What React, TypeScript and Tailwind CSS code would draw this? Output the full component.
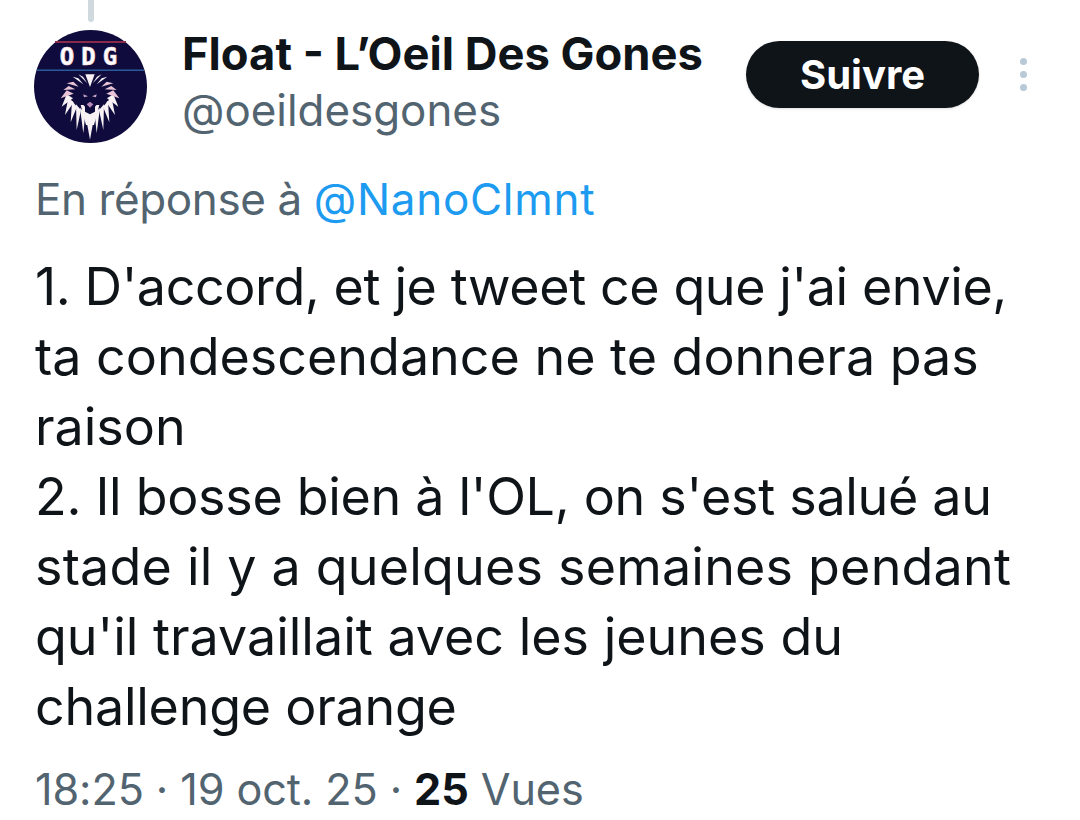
const font = { fontFamily: "Inter, 'Noto Sans', sans-serif" };

// mane strands, left side, drawn on a 3x grid and mirrored around x=120
const strands = [
  [90, 128, 106, 145, 100, 205],
  [78, 118, 93, 135, 80, 195],
  [66, 108, 81, 125, 62, 172],
  [55, 98, 71, 112, 45, 150],
  [50, 88, 69, 100, 35, 125],
  [50, 76, 71, 86, 32, 100],
  [56, 63, 76, 73, 40, 75],
  [70, 50, 86, 65, 50, 55],
  [85, 40, 100, 58, 68, 35],
  [99, 35, 112, 55, 85, 28],
];

function Avatar() {
  return (
    <svg viewBox="0 0 113 113" className="w-[113px] h-[113px] shrink-0">
      <circle cx="56.5" cy="56.5" r="56.5" fill="#0f0c3d" />
      <rect x="21" y="11" width="71" height="2" fill="#8a2a4a" />
      <rect x="3" y="39.5" width="107" height="1.5" fill="#2a5a9c" />
      <text x="58" y="35" textAnchor="middle" fontSize="24" fontWeight="700" fill="#fff" stroke="#f3d5df" strokeWidth="0.7" letterSpacing="7" fontFamily="'DejaVu Sans Mono', monospace">ODG</text>
      <g transform="translate(16 35) scale(0.3333)">
        {strands.map((s, i) => (
          <g key={i}>
            <polygon points={`${s[0]},${s[1]} ${s[2]},${s[3]} ${s[4]},${s[5]}`} fill={i > 4 && i < 8 ? "#e9c4d6" : "#f8f2f5"} />
            <polygon points={`${240 - s[0]},${s[1]} ${240 - s[2]},${s[3]} ${240 - s[4]},${s[5]}`} fill={i > 4 && i < 8 ? "#e9c4d6" : "#f8f2f5"} />
          </g>
        ))}
        <polygon points="106,28 134,28 120,66" fill="#f8f2f5" />
        <polygon points="104,136 136,136 120,224" fill="#f8f2f5" />
        <polygon points="92,120 148,120 132,180 108,180" fill="#f8f2f5" />
        {/* face */}
        <path d="M90 85 Q120 66 150 85 L148 110 L135 125 L135 140 L120 148 L105 140 L105 125 L92 110 Z" fill="#0f0c3d" />
        <path d="M100 88 L114 94 L102 97 Z M140 88 L126 94 L138 97 Z" fill="#c9a5c9" />
        <path d="M110 118 L120 110 L130 118 L120 128 Z" fill="#b88ab8" />
      </g>
    </svg>
  );
}

export default function App() {
  return (
    <div className="w-[1080px] h-[820px] overflow-hidden bg-white" style={font}>
      {/* thread line */}
      <div className="ml-[88px] w-[6px] h-[22px] rounded-b-full bg-[#cfd9de]" />

      <div className="flex items-start pl-[34px] pt-[8px]">
        <Avatar />
        <div className="ml-[35px] w-[564px] -mt-[1px]">
          <div className="text-[45.3px] leading-[50px] font-bold text-[#0f1419] whitespace-nowrap">Float - L’Oeil Des Gones</div>
          <div className="text-[43.9px] leading-[50px] mt-[6px] text-[#536471]">@oeildesgones</div>
        </div>
        <button className="w-[233px] h-[67px] mt-[11px] rounded-full bg-[#0f1419] text-white text-[40px] font-bold shadow-sm">Suivre</button>
        <div className="ml-[41px] mt-[28px] flex flex-col gap-[6px]">
          <span className="w-[7px] h-[7px] rounded-full bg-[#b9c9d6]" />
          <span className="w-[7px] h-[7px] rounded-full bg-[#b9c9d6]" />
          <span className="w-[7px] h-[7px] rounded-full bg-[#b9c9d6]" />
        </div>
      </div>

      <div className="pl-[35px] mt-[29px] text-[44px] leading-[54px] text-[#536471] whitespace-nowrap">
        <span className="tracking-[-0.4px]">En réponse à </span>
        <span className="text-[#1d9bf0] tracking-[0.7px]">@NanoClmnt</span>
      </div>

      <div className="pl-[35px] mt-[26px] text-[52px] leading-[70px] text-[#0f1419] whitespace-nowrap">
        <div className="tracking-[-0.4px]">1. D'accord, et je tweet ce que j'ai envie,</div>
        <div>ta condescendance ne te donnera pas</div>
        <div>raison</div>
        <div className="tracking-[-0.3px]">2. Il bosse bien à l'OL, on s'est salué au</div>
        <div className="tracking-[0.2px]">stade il y a quelques semaines pendant</div>
        <div>qu'il travaillait avec les jeunes du</div>
        <div className="tracking-[-0.25px]">challenge orange</div>
      </div>

      <div className="pl-[35px] mt-[22px] text-[43.2px] leading-[50px] text-[#536471] tracking-[-0.1px] whitespace-nowrap">
        18:25 · 19 oct. 25 · <span className="font-bold text-[#0f1419]">25</span> Vues
      </div>
    </div>
  );
}
